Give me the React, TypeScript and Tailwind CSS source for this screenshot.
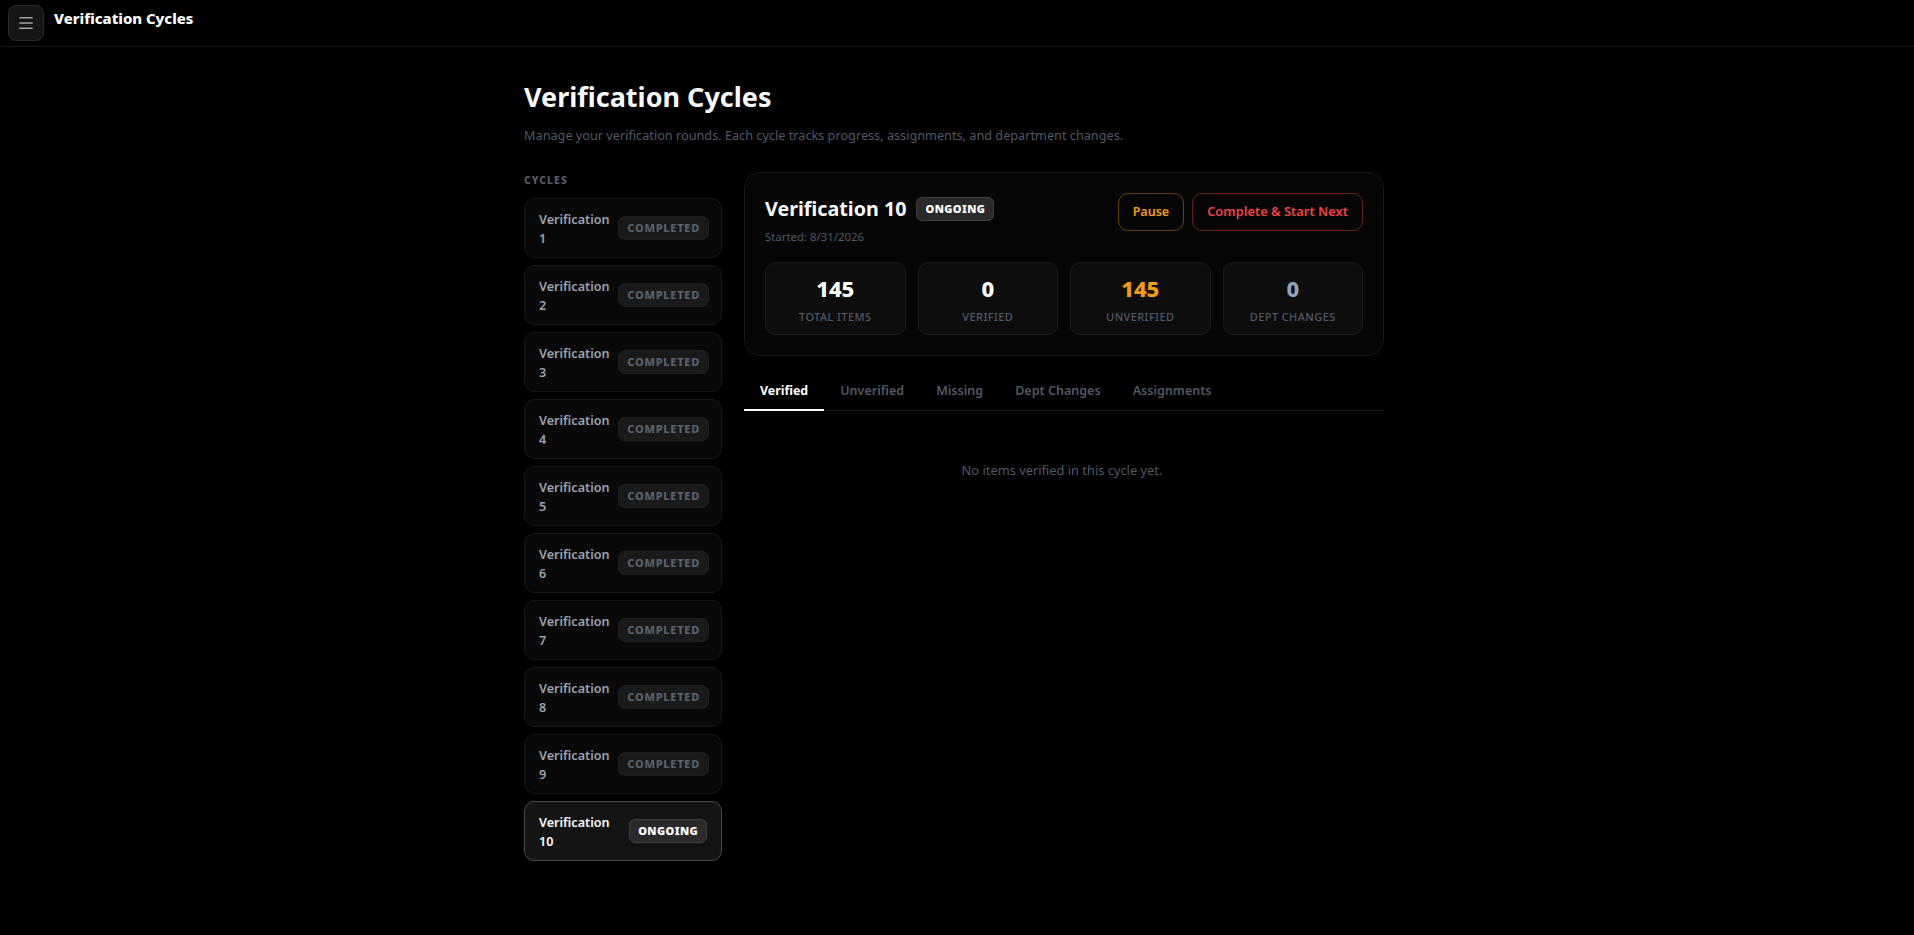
import React from 'react';
import { Menu } from 'lucide-react';

const cycles = [1, 2, 3, 4, 5, 6, 7, 8, 9, 10];

const stats = [
  { value: '145', label: 'TOTAL ITEMS', color: 'text-white' },
  { value: '0', label: 'VERIFIED', color: 'text-white' },
  { value: '145', label: 'UNVERIFIED', color: 'text-[#f59e0b]' },
  { value: '0', label: 'DEPT CHANGES', color: 'text-[#94a3b8]' },
];

const tabs = ['Verified', 'Unverified', 'Missing', 'Dept Changes', 'Assignments'];

const font = "font-['Noto_Sans','Open_Sans',sans-serif]";

const OngoingBadge: React.FC = () => (
  <span className="flex h-6 items-center justify-center rounded-md border border-[#3f3f3f] bg-[#2a2a2a] px-[8px] text-[11px] font-black tracking-[0.4px] text-white">
    ONGOING
  </span>
);

const App: React.FC = () => {
  return (
    <div className={`min-h-[935px] bg-black ${font}`}>
      <header className="flex h-[47px] items-start border-b border-[#161616] pl-2 pr-4 pt-[5px]">
        <button className="flex h-9 w-9 items-center justify-center rounded-lg border border-[#2a2a2a] bg-[#161616] text-[#a3a3a3]">
          <Menu size={18} strokeWidth={2.25} />
        </button>
        <span className="ml-[10px] mt-[1px] text-[14.9px] font-extrabold leading-6 text-white">Verification Cycles</span>
      </header>

      <div className="pr-[6px]">
        <main className="mx-auto max-w-[900px] px-5 pt-[30px]">
          <h1 className="text-[27px] font-bold leading-10 text-[#f8fafc]">Verification Cycles</h1>
          <p className="mt-[8px] text-[12.7px] leading-5 text-[#525866]">
            Manage your verification rounds. Each cycle tracks progress, assignments, and department changes.
          </p>

          <div className="mt-[27px] flex gap-[22px]">
            <aside className="w-[198px] shrink-0">
              <div className="mb-[12px] mt-[2px] text-[10.5px] font-extrabold leading-3 tracking-[1px] text-[#565c68]">CYCLES</div>
              <div className="flex flex-col gap-[7px]">
                {cycles.map(n => {
                  const active = n === 10;
                  return (
                    <div
                      key={n}
                      className={
                        active
                          ? 'flex h-[60px] items-center justify-between rounded-[10px] border border-[#4a4a4a] bg-[#141414] pl-[14px] pr-[14px]'
                          : 'flex h-[60px] items-center justify-between rounded-[10px] border border-[#171717] bg-[#090909] pl-[14px] pr-[12px]'
                      }
                    >
                      <span className={`mt-[1px] w-[68px] text-[12.6px] font-semibold leading-[19px] ${active ? 'text-white' : 'text-[#9ca3af]'}`}>
                        Verification {n}
                      </span>
                      {active ? (
                        <OngoingBadge />
                      ) : (
                        <span className="flex h-6 items-center rounded-[7px] border border-[#1f1f1f] bg-[#1a1a1a] px-[8px] text-[11px] font-extrabold tracking-[0.75px] text-[#5b616b]">
                          COMPLETED
                        </span>
                      )}
                    </div>
                  );
                })}
              </div>
            </aside>

            <section className="min-w-0 flex-1">
              <div className="rounded-2xl border border-[#1a1a1a] bg-[#060606] p-5">
                <div className="flex items-start justify-between">
                  <div>
                    <div className="mt-1 flex items-center gap-[10px]">
                      <h2 className="text-[19.7px] font-bold leading-6 text-[#f8fafc]">Verification 10</h2>
                      <OngoingBadge />
                    </div>
                    <p className="mt-[8px] text-[11.4px] leading-4 text-[#525866]">Started: 8/31/2026</p>
                  </div>
                  <div className="flex gap-2">
                    <button className="h-[38px] rounded-[10px] border border-[#f59e0b]/40 px-[14px] text-[12.5px] font-semibold text-[#f59e0b]">
                      Pause
                    </button>
                    <button className="h-[38px] rounded-[10px] border border-[#ef4444]/40 px-[14px] text-[12.9px] font-semibold text-[#ef4444]">
                      Complete &amp; Start Next
                    </button>
                  </div>
                </div>

                <div className="mt-[17px] grid grid-cols-4 gap-3">
                  {stats.map(s => (
                    <div key={s.label} className="flex h-[73px] flex-col items-center rounded-[10px] border border-[#1a1a1a] bg-[#0d0d0d] pt-[13px]">
                      <div className={`text-[22px] font-extrabold leading-6 ${s.color}`}>{s.value}</div>
                      <div className="mt-[9px] text-[11px] font-medium leading-4 tracking-[0.4px] text-[#525866]">{s.label}</div>
                    </div>
                  ))}
                </div>
              </div>

              <div className="mt-[15px] flex border-b border-[#161616]">
                {tabs.map((t, i) => (
                  <div
                    key={t}
                    className={
                      i === 0
                        ? '-mb-px h-10 border-b-2 border-white px-4 pt-[10px] text-[12.4px] font-bold leading-5 text-white'
                        : '-mb-px h-10 border-b-2 border-transparent px-4 pt-[10px] text-[12.55px] font-semibold leading-5 text-[#525866]'
                    }
                  >
                    {t}
                  </div>
                ))}
              </div>

              <p className="pr-1 pt-[49px] text-center text-[12.85px] leading-5 text-[#525866]">No items verified in this cycle yet.</p>
            </section>
          </div>
        </main>
      </div>
    </div>
  );
};

export default App;
